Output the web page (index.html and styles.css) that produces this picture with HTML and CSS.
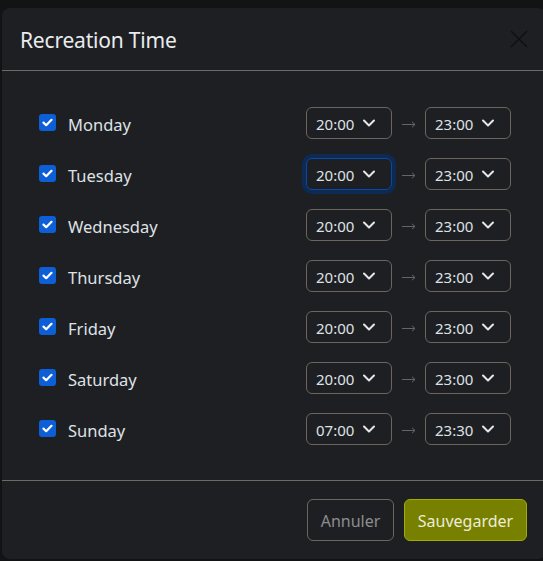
FILE: index.html
```html
<!DOCTYPE html>
<html>
<head>
<meta charset="utf-8">
<link rel="stylesheet" href="styles.css">
</head>
<body>
<div class="modal">
  <div class="modal-header">
    <h5 class="modal-title">Recreation Time</h5>
    <svg class="close" width="18" height="18" viewBox="0 0 18 18"><path d="M1 1L17 17M17 1L1 17" stroke="#0f1011" stroke-width="1.6" fill="none"/></svg>
  </div>
  <div class="modal-body">
    <div class="row">
      <span class="check"><svg width="11" height="9" viewBox="0 0 11 9"><path d="M1.5 4.6L4.2 7.2L9.5 1.8" stroke="#fff" stroke-width="2.2" fill="none" stroke-linecap="round" stroke-linejoin="round"/></svg></span>
      <span class="day">Monday</span>
      <div class="times">
        <div class="select"><span>20:00</span><svg class="chev" width="12" height="8" viewBox="0 0 12 8"><path d="M1 1.5L6 6.5L11 1.5" stroke="#e6e6e6" stroke-width="2" fill="none" stroke-linecap="round" stroke-linejoin="round"/></svg></div>
        <svg class="arrow" width="14" height="7" viewBox="0 0 14 7"><path d="M0 3.5H13M10 0.8L13 3.5L10 6.2" stroke="#63666a" stroke-width="1" fill="none"/></svg>
        <div class="select"><span>23:00</span><svg class="chev" width="12" height="8" viewBox="0 0 12 8"><path d="M1 1.5L6 6.5L11 1.5" stroke="#e6e6e6" stroke-width="2" fill="none" stroke-linecap="round" stroke-linejoin="round"/></svg></div>
      </div>
    </div>
    <div class="row">
      <span class="check"><svg width="11" height="9" viewBox="0 0 11 9"><path d="M1.5 4.6L4.2 7.2L9.5 1.8" stroke="#fff" stroke-width="2.2" fill="none" stroke-linecap="round" stroke-linejoin="round"/></svg></span>
      <span class="day">Tuesday</span>
      <div class="times">
        <div class="select focus"><span>20:00</span><svg class="chev" width="12" height="8" viewBox="0 0 12 8"><path d="M1 1.5L6 6.5L11 1.5" stroke="#e6e6e6" stroke-width="2" fill="none" stroke-linecap="round" stroke-linejoin="round"/></svg></div>
        <svg class="arrow" width="14" height="7" viewBox="0 0 14 7"><path d="M0 3.5H13M10 0.8L13 3.5L10 6.2" stroke="#63666a" stroke-width="1" fill="none"/></svg>
        <div class="select"><span>23:00</span><svg class="chev" width="12" height="8" viewBox="0 0 12 8"><path d="M1 1.5L6 6.5L11 1.5" stroke="#e6e6e6" stroke-width="2" fill="none" stroke-linecap="round" stroke-linejoin="round"/></svg></div>
      </div>
    </div>
    <div class="row">
      <span class="check"><svg width="11" height="9" viewBox="0 0 11 9"><path d="M1.5 4.6L4.2 7.2L9.5 1.8" stroke="#fff" stroke-width="2.2" fill="none" stroke-linecap="round" stroke-linejoin="round"/></svg></span>
      <span class="day">Wednesday</span>
      <div class="times">
        <div class="select"><span>20:00</span><svg class="chev" width="12" height="8" viewBox="0 0 12 8"><path d="M1 1.5L6 6.5L11 1.5" stroke="#e6e6e6" stroke-width="2" fill="none" stroke-linecap="round" stroke-linejoin="round"/></svg></div>
        <svg class="arrow" width="14" height="7" viewBox="0 0 14 7"><path d="M0 3.5H13M10 0.8L13 3.5L10 6.2" stroke="#63666a" stroke-width="1" fill="none"/></svg>
        <div class="select"><span>23:00</span><svg class="chev" width="12" height="8" viewBox="0 0 12 8"><path d="M1 1.5L6 6.5L11 1.5" stroke="#e6e6e6" stroke-width="2" fill="none" stroke-linecap="round" stroke-linejoin="round"/></svg></div>
      </div>
    </div>
    <div class="row">
      <span class="check"><svg width="11" height="9" viewBox="0 0 11 9"><path d="M1.5 4.6L4.2 7.2L9.5 1.8" stroke="#fff" stroke-width="2.2" fill="none" stroke-linecap="round" stroke-linejoin="round"/></svg></span>
      <span class="day">Thursday</span>
      <div class="times">
        <div class="select"><span>20:00</span><svg class="chev" width="12" height="8" viewBox="0 0 12 8"><path d="M1 1.5L6 6.5L11 1.5" stroke="#e6e6e6" stroke-width="2" fill="none" stroke-linecap="round" stroke-linejoin="round"/></svg></div>
        <svg class="arrow" width="14" height="7" viewBox="0 0 14 7"><path d="M0 3.5H13M10 0.8L13 3.5L10 6.2" stroke="#63666a" stroke-width="1" fill="none"/></svg>
        <div class="select"><span>23:00</span><svg class="chev" width="12" height="8" viewBox="0 0 12 8"><path d="M1 1.5L6 6.5L11 1.5" stroke="#e6e6e6" stroke-width="2" fill="none" stroke-linecap="round" stroke-linejoin="round"/></svg></div>
      </div>
    </div>
    <div class="row">
      <span class="check"><svg width="11" height="9" viewBox="0 0 11 9"><path d="M1.5 4.6L4.2 7.2L9.5 1.8" stroke="#fff" stroke-width="2.2" fill="none" stroke-linecap="round" stroke-linejoin="round"/></svg></span>
      <span class="day">Friday</span>
      <div class="times">
        <div class="select"><span>20:00</span><svg class="chev" width="12" height="8" viewBox="0 0 12 8"><path d="M1 1.5L6 6.5L11 1.5" stroke="#e6e6e6" stroke-width="2" fill="none" stroke-linecap="round" stroke-linejoin="round"/></svg></div>
        <svg class="arrow" width="14" height="7" viewBox="0 0 14 7"><path d="M0 3.5H13M10 0.8L13 3.5L10 6.2" stroke="#63666a" stroke-width="1" fill="none"/></svg>
        <div class="select"><span>23:00</span><svg class="chev" width="12" height="8" viewBox="0 0 12 8"><path d="M1 1.5L6 6.5L11 1.5" stroke="#e6e6e6" stroke-width="2" fill="none" stroke-linecap="round" stroke-linejoin="round"/></svg></div>
      </div>
    </div>
    <div class="row">
      <span class="check"><svg width="11" height="9" viewBox="0 0 11 9"><path d="M1.5 4.6L4.2 7.2L9.5 1.8" stroke="#fff" stroke-width="2.2" fill="none" stroke-linecap="round" stroke-linejoin="round"/></svg></span>
      <span class="day">Saturday</span>
      <div class="times">
        <div class="select"><span>20:00</span><svg class="chev" width="12" height="8" viewBox="0 0 12 8"><path d="M1 1.5L6 6.5L11 1.5" stroke="#e6e6e6" stroke-width="2" fill="none" stroke-linecap="round" stroke-linejoin="round"/></svg></div>
        <svg class="arrow" width="14" height="7" viewBox="0 0 14 7"><path d="M0 3.5H13M10 0.8L13 3.5L10 6.2" stroke="#63666a" stroke-width="1" fill="none"/></svg>
        <div class="select"><span>23:00</span><svg class="chev" width="12" height="8" viewBox="0 0 12 8"><path d="M1 1.5L6 6.5L11 1.5" stroke="#e6e6e6" stroke-width="2" fill="none" stroke-linecap="round" stroke-linejoin="round"/></svg></div>
      </div>
    </div>
    <div class="row">
      <span class="check"><svg width="11" height="9" viewBox="0 0 11 9"><path d="M1.5 4.6L4.2 7.2L9.5 1.8" stroke="#fff" stroke-width="2.2" fill="none" stroke-linecap="round" stroke-linejoin="round"/></svg></span>
      <span class="day">Sunday</span>
      <div class="times">
        <div class="select"><span>07:00</span><svg class="chev" width="12" height="8" viewBox="0 0 12 8"><path d="M1 1.5L6 6.5L11 1.5" stroke="#e6e6e6" stroke-width="2" fill="none" stroke-linecap="round" stroke-linejoin="round"/></svg></div>
        <svg class="arrow" width="14" height="7" viewBox="0 0 14 7"><path d="M0 3.5H13M10 0.8L13 3.5L10 6.2" stroke="#63666a" stroke-width="1" fill="none"/></svg>
        <div class="select"><span>23:30</span><svg class="chev" width="12" height="8" viewBox="0 0 12 8"><path d="M1 1.5L6 6.5L11 1.5" stroke="#e6e6e6" stroke-width="2" fill="none" stroke-linecap="round" stroke-linejoin="round"/></svg></div>
      </div>
    </div>
  </div>
  <div class="modal-footer">
    <button class="btn btn-cancel">Annuler</button>
    <button class="btn btn-save">Sauvegarder</button>
  </div>
</div>
</body>
</html>
```

FILE: styles.css
```css
html, body {
  margin: 0;
  padding: 0;
}
body {
  background: #121314;
  width: 543px;
  height: 561px;
  overflow: hidden;
  font-family: "Noto Sans", "Open Sans", sans-serif;
  color: #dee2e6;
}
.modal {
  margin: 8px 0 0 2px;
  width: 544px;
  height: 551px;
  background: #1e1f22;
  border-radius: 8px;
  display: flex;
  flex-direction: column;
}
.modal-header {
  height: 63px;
  box-sizing: border-box;
  padding: 2px 18px 0 18px;
  border-bottom: 1px solid #6e6962;
  display: flex;
  align-items: center;
  justify-content: space-between;
}
.modal-title {
  margin: 0;
  font-size: 21px;
  font-weight: 400;
  color: #e9ecef;
  letter-spacing: -0.2px;
}
.close {
  display: block;
  margin-top: -2px;
}
.modal-body {
  padding: 26px 35px 26px 37px;
}
.row {
  height: 51px;
  display: flex;
  align-items: center;
}
.check {
  width: 17px;
  height: 17px;
  border-radius: 3px;
  background: #0d5fd8;
  display: flex;
  align-items: center;
  justify-content: center;
  flex-shrink: 0;
}
.check svg {
  display: block;
}
.day {
  margin-left: 12px;
  padding-top: 3px;
  font-size: 16.5px;
  color: #dee2e6;
  flex: 1;
}
.times {
  display: flex;
  align-items: center;
}
.select {
  width: 86px;
  height: 32px;
  box-sizing: border-box;
  border: 1px solid #6b655d;
  border-radius: 6px;
  display: flex;
  align-items: center;
  padding-left: 9px;
  font-size: 15px;
  color: #dee2e6;
}
.select span {
  width: 47px;
  padding-top: 2px;
}
.select.focus {
  border-color: #0b48a6;
  box-shadow: 0 0 0 4px #0c2a52;
}
.chev {
  display: block;
}
.arrow {
  display: block;
  margin: 4px 9px 0 10px;
}
.modal-footer {
  border-top: 1px solid #6e6962;
  padding: 18px 19px 0 0;
  display: flex;
  justify-content: flex-end;
  gap: 10px;
}
.btn {
  height: 42px;
  border-radius: 6px;
  font-family: "Noto Sans", "Open Sans", sans-serif;
  font-size: 16px;
  padding: 2px 10px 0;
  cursor: pointer;
}
.btn-cancel {
  width: 87px;
  background: transparent;
  border: 1px solid #6b675f;
  color: #8d8d8d;
}
.btn-save {
  width: 123px;
  background: #788000;
  border: 1px solid #a3ac00;
  color: #ecedd6;
}
```
